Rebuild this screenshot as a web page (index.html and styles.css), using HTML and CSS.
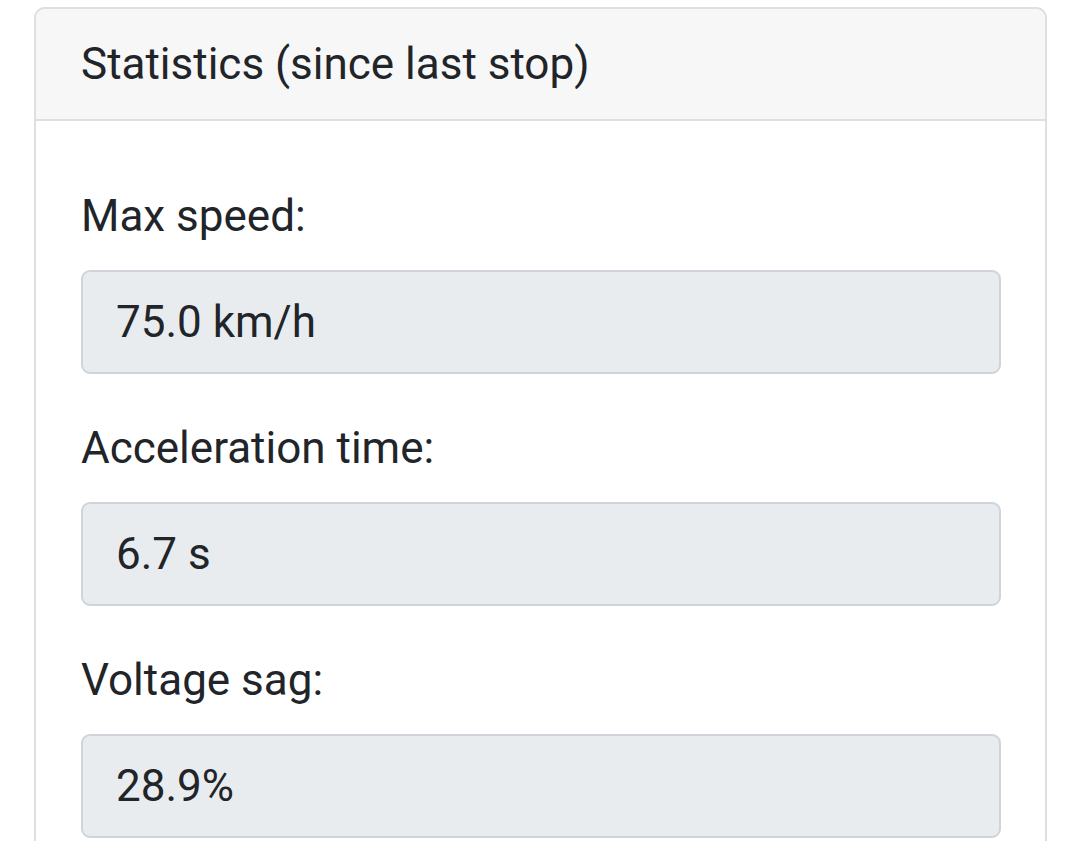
FILE: index.html
```html
<!DOCTYPE html>
<html>
<head>
<meta name="viewport" content="width=device-width, initial-scale=1.0" charset="UTF-8">
<title>Statistics</title>
<link rel="stylesheet" href="styles.css">
</head>
<body>
<div class="card">
	<div class="card-header">Statistics (since last stop)</div>
	<div class="card-body">
		<div class="form-group">
			<label class="label">Max speed:</label>
			<div class="form-control">75.0 km/h</div>
		</div>
		<div class="form-group">
			<label class="label">Acceleration time:</label>
			<div class="form-control">6.7 s</div>
		</div>
		<div class="form-group">
			<label class="label">Voltage sag:</label>
			<div class="form-control">28.9%</div>
		</div>
	</div>
</div>
</body>
</html>
```
FILE: styles.css
```css
html, body {
  margin: 0;
  height: 100%;
  overflow: hidden;
  background: #fff;
}

body {
  font-family: Roboto, "Liberation Sans", sans-serif;
  font-size: 44px;
  color: #212529;
}

.card {
  margin: 7px 33px 0 34px;
  border: 2px solid #dfdfdf;
  border-radius: 11px;
  overflow: hidden;
}

.card-header {
  background-color: #f7f7f7;
  border-bottom: 2px solid #dfdfdf;
  height: 110px;
  line-height: 110px;
  padding: 0 45px;
}

.card-body {
  padding: 68px 44px 40px 45px;
}

.form-group {
  margin-bottom: 47px;
}

.label {
  display: block;
  line-height: 54px;
  margin-bottom: 27px;
}

.form-control {
  background-color: #e9ecef;
  border: 2px solid #ced4da;
  border-radius: 9px;
  height: 100px;
  line-height: 100px;
  padding: 0 33px;
}
```
